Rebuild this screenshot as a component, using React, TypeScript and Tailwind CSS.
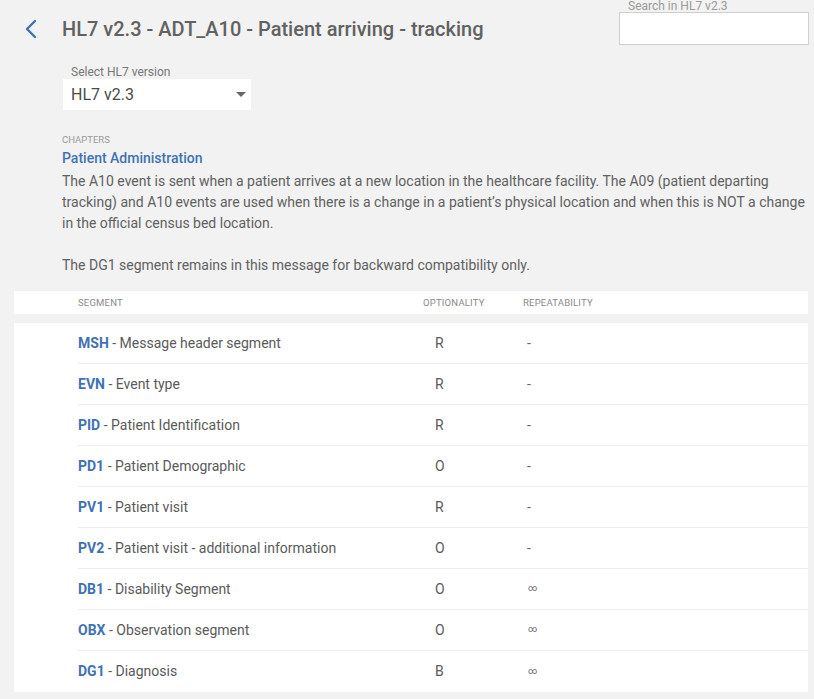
import React from 'react';

const segments = [
  { code: 'MSH', name: 'Message header segment', opt: 'R', rep: '-' },
  { code: 'EVN', name: 'Event type', opt: 'R', rep: '-' },
  { code: 'PID', name: 'Patient Identification', opt: 'R', rep: '-' },
  { code: 'PD1', name: 'Patient Demographic', opt: 'O', rep: '-' },
  { code: 'PV1', name: 'Patient visit', opt: 'R', rep: '-' },
  { code: 'PV2', name: 'Patient visit - additional information', opt: 'O', rep: '-' },
  { code: 'DB1', name: 'Disability Segment', opt: 'O', rep: '∞' },
  { code: 'OBX', name: 'Observation segment', opt: 'O', rep: '∞' },
  { code: 'DG1', name: 'Diagnosis', opt: 'B', rep: '∞' },
];

export default function App() {
  return (
    <div className="min-h-[699px] w-[814px] bg-[#f2f2f2] font-['Roboto',sans-serif] text-[#616161]">
      {/* header */}
      <div className="relative h-[60px]">
        <div className="flex items-center pt-[17px]">
          <div className="w-[62px] flex justify-start pl-[24px]">
            <svg width="14" height="22" viewBox="0 0 14 22" fill="none">
              <path d="M11 3 L3 11 L11 19" stroke="#3f72b5" strokeWidth="2.4" strokeLinecap="round" strokeLinejoin="round" />
            </svg>
          </div>
          <h1 className="text-[20px] font-medium leading-[24px] text-[#616161]">
            HL7 v2.3 - ADT_A10 - Patient arriving - tracking
          </h1>
        </div>
        <div className="absolute left-[619px] top-0 w-[190px]">
          <div className="pl-[9px] text-[12px] leading-[12px] text-[#9a9a9a]">Search in HL7 v2.3</div>
          <div className="h-[33px] border border-[#cfcfcf] bg-white" />
        </div>
      </div>

      {/* select */}
      <div className="ml-[63px] mt-[5px] w-[188px]">
        <div className="pl-[8px] text-[12px] leading-[14px] text-[#777]">Select HL7 version</div>
        <div className="flex h-[31px] items-center justify-between bg-white pl-[8px] pr-[5px]">
          <span className="text-[16px] text-[#4a4a4a]">HL7 v2.3</span>
          <svg width="10" height="5" viewBox="0 0 10 5"><path d="M0 0 L10 0 L5 5 Z" fill="#666" /></svg>
        </div>
      </div>

      {/* chapter */}
      <div className="ml-[62px] mt-[24px] pr-[6px]">
        <div className="text-[9.5px] leading-[12px] text-[#9a9a9a]">CHAPTERS</div>
        <div className="mt-[2px] text-[14px] font-medium leading-[20px] text-[#3f72b5]">Patient Administration</div>
        <p className="mt-[3px] text-[14px] leading-[21px] text-[#616161]">
          The A10 event is sent when a patient arrives at a new location in the healthcare facility. The A09 (patient departing
          tracking) and A10 events are used when there is a change in a patient’s physical location and when this is NOT a change
          in the official census bed location.
        </p>
        <p className="mt-[21px] text-[14px] leading-[21px] text-[#616161]">
          The DG1 segment remains in this message for backward compatibility only.
        </p>
      </div>

      {/* table */}
      <div className="ml-[14px] mt-[15px] w-[794px]">
        <div className="flex h-[23px] items-center pt-[1px] bg-white text-[9.5px] tracking-[0.2px] text-[#8a8a8a]">
          <div className="w-[409px] pl-[64px]">SEGMENT</div>
          <div className="w-[100px]">OPTIONALITY</div>
          <div>REPEATABILITY</div>
        </div>
        <div className="mt-[9px] bg-white pl-[64px]">
          {segments.map((s, i) => (
            <div
              key={s.code}
              className={`flex h-[41px] items-center text-[14px] ${i < segments.length - 1 ? 'border-b border-[#ececec]' : ''}`}
            >
              <div className="w-[345px]">
                <span className="font-bold text-[#3f72b5]">{s.code}</span>
                <span className="text-[#5a5a5a]"> - {s.name}</span>
              </div>
              <div className="w-[104px] pl-[12px] text-[#5a5a5a]">{s.opt}</div>
              <div className={s.rep === '∞' ? 'pl-[1px] text-[9px] text-[#666]' : 'text-[#666]'}>{s.rep}</div>
            </div>
          ))}
        </div>
      </div>
    </div>
  );
}
